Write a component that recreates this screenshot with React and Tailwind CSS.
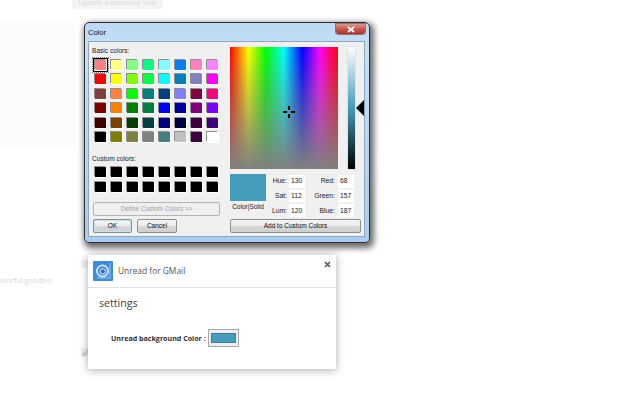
import React from "react";

const basicColors = [
  ["bg-[#ff8080]", "bg-[#ffff80]", "bg-[#80ff80]", "bg-[#00ff80]", "bg-[#80ffff]", "bg-[#0080ff]", "bg-[#ff80c0]", "bg-[#ff80ff]"],
  ["bg-[#ff0000]", "bg-[#ffff00]", "bg-[#80ff00]", "bg-[#00ff40]", "bg-[#00ffff]", "bg-[#0080c0]", "bg-[#8080c0]", "bg-[#ff00ff]"],
  ["bg-[#804040]", "bg-[#ff8040]", "bg-[#00ff00]", "bg-[#008080]", "bg-[#004080]", "bg-[#8080ff]", "bg-[#800040]", "bg-[#ff0080]"],
  ["bg-[#800000]", "bg-[#ff8000]", "bg-[#008000]", "bg-[#008040]", "bg-[#0000ff]", "bg-[#0000a0]", "bg-[#800080]", "bg-[#8000ff]"],
  ["bg-[#400000]", "bg-[#804000]", "bg-[#004000]", "bg-[#004040]", "bg-[#000080]", "bg-[#000040]", "bg-[#400040]", "bg-[#400080]"],
  ["bg-[#000000]", "bg-[#808000]", "bg-[#808040]", "bg-[#808080]", "bg-[#408080]", "bg-[#c0c0c0]", "bg-[#400040]", "bg-[#ffffff]"],
];

const customColors = Array.from({ length: 16 }, () => "bg-black");

const fields = [
  ["Hue:", "130", "Red:", "68"],
  ["Sat:", "112", "Green:", "157"],
  ["Lum:", "120", "Blue:", "187"],
];

function Swatch({ color, selected }) {
  return (
    <div className={`relative h-[10px] w-[11px] shadow-[-1px_-1px_0_#8f8f8f,1px_1px_0_#fff] ${color}`}>
      {selected && (
        <div className="absolute -left-[2px] -top-[2px] h-[14px] w-[15px] border border-black outline-1 outline-dotted outline-[#777]" />
      )}
    </div>
  );
}

function WinButton({ children, className }) {
  return (
    <div className={`flex items-center justify-center rounded-[2px] border border-[#8e8e8e] bg-[linear-gradient(#f4f4f4,#ebebeb_48%,#d8d8d8_52%,#cfcfcf)] text-[6.5px] text-[#111] ${className}`}>
      {children}
    </div>
  );
}

function ColorDialog() {
  return (
    <div className="absolute left-[84px] top-[22px] flex h-[221px] w-[286px] flex-col rounded-[5px] border border-[#2e2e2e] bg-[linear-gradient(#bcd9f5,#c5dff7_12%,#a8cdf0)] pb-[5px] pl-[3px] pr-[4px] shadow-[2px_3px_6px_2px_rgba(0,0,0,0.6)]">
      <div className="flex h-[18px] shrink-0 items-start justify-between">
        <span className="pt-[4px] text-[7.5px] leading-[12px] text-[#111]">Color</span>
        <div className="mt-[1px] flex h-[10px] w-[29px] items-center justify-center rounded-b-[3px] bg-[linear-gradient(#dd9a92,#c8574c_50%,#a8352c)] shadow-[0_0_0_1px_#9a6b68]">
          <svg width="8" height="7" viewBox="0 0 8 7">
            <path d="M1 1l6 5M7 1L1 6" stroke="#fff" strokeWidth="1.8" />
          </svg>
        </div>
      </div>

      <div className="flex flex-1 border border-[#8ea6bd] bg-[#f0f0f0]">
        <div className="flex w-[141px] shrink-0 flex-col pl-[3px]">
          <span className="mt-[3px] text-[6.6px] leading-[12px] text-[#222]">Basic colors:</span>
          <div className="ml-[3px] mt-[3px] flex flex-col gap-[4.4px]">
            {basicColors.map((row, r) => (
              <div key={r} className="flex gap-[5px]">
                {row.map((c, i) => (
                  <Swatch key={i} color={c} selected={r === 0 && i === 0} />
                ))}
              </div>
            ))}
          </div>
          <span className="mt-[11px] text-[6.6px] leading-[12px] text-[#222]">Custom colors:</span>
          <div className="ml-[3px] mt-[2px] grid grid-cols-[repeat(8,11px)] gap-x-[5px] gap-y-[5px]">
            {customColors.map((c, i) => (
              <Swatch key={i} color={c} />
            ))}
          </div>
          <div className="ml-[1px] mt-[10px] flex h-[14px] w-[127px] items-center justify-center rounded-[2px] border border-[#b5b5b5] bg-[#efefef] text-[6.4px] text-[#a0a0a0]">
            Define Custom Colors &gt;&gt;
          </div>
          <div className="ml-[1px] mt-[3px] flex gap-[5px]">
            <WinButton className="h-[14px] w-[39px] border-[#3c7fb1] shadow-[inset_0_0_0_1px_#bfe3f5]">OK</WinButton>
            <WinButton className="h-[14px] w-[40px]">Cancel</WinButton>
          </div>
        </div>

        <div className="flex flex-1 flex-col pt-[5px]">
          <div className="flex">
            <div className="relative h-[122px] w-[108px] bg-[linear-gradient(to_bottom,rgba(128,128,128,0),#808080),linear-gradient(to_right,#ff0000,#ffff00_17%,#00ff00_33%,#00ffff_50%,#0000ff_67%,#ff00ff_83%,#ff0000)]">
              <svg className="absolute left-[53px] top-[59px]" width="12" height="12" viewBox="0 0 12 12">
                <path d="M5 0h2v4H5zM5 8h2v4H5zM0 5h4v2H0zM8 5h4v2H8z" fill="#000" />
              </svg>
            </div>
            <div className="ml-[10px] h-[122px] w-[7px] bg-[linear-gradient(#fff,#439dbb_50%,#000)] shadow-[0_0_0_1px_#e2e2e2]" />
            <svg className="ml-[1px] mt-[53px]" width="8" height="16" viewBox="0 0 8 16">
              <path d="M8 0v16L0 8z" fill="#000" />
            </svg>
          </div>

          <div className="mt-[5px] flex">
            <div className="flex w-[36px] flex-col items-center">
              <div className="h-[27px] w-[36px] bg-[#439dbb]" />
              <span className="whitespace-nowrap text-[6.5px] leading-[12px] text-[#222]">Color|Solid</span>
            </div>
            <div className="flex flex-col">
              {fields.map(([a, b, c, d]) => (
                <div key={a} className="flex h-[14.7px] items-center text-[6.8px] text-[#222]">
                  <span className="w-[21px] text-right">{a}</span>
                  <span className="ml-[2px] flex h-[12.5px] w-[16px] items-center bg-white pl-[2px]">{b}</span>
                  <span className="w-[30px] text-right">{c}</span>
                  <span className="ml-[3px] flex h-[12.5px] w-[16px] items-center bg-white pl-[2px]">{d}</span>
                </div>
              ))}
            </div>
          </div>

          <WinButton className="mt-[1px] h-[14px] w-[131px]">Add to Custom Colors</WinButton>
        </div>
      </div>
    </div>
  );
}

function SettingsPopup() {
  return (
    <div className="absolute left-[88px] top-[255px] flex h-[114px] w-[248px] flex-col bg-white shadow-[0_1px_8px_rgba(0,0,0,0.35)] [font-family:'Open_Sans',sans-serif]">
      <div className="flex h-[33px] shrink-0 items-center border-b border-[#e2e2e2] pl-[5px]">
        <svg className="h-[20px] w-[20px]" viewBox="0 0 20 20">
          <rect width="20" height="20" rx="1" fill="#3f8be0" />
          <path d="M15 2h3v16H4v-2h12V3z" fill="#6ea9e8" />
          <circle cx="9.5" cy="10" r="5.6" fill="none" stroke="#d5e5f5" strokeWidth="1.8" />
          <circle cx="9.8" cy="10.4" r="2.6" fill="#2b6fc0" stroke="#e8f2fb" strokeWidth="1" />
        </svg>
        <span className="ml-[5px] text-[8.4px] text-[#555]">Unread for GMail</span>
        <svg className="ml-auto mr-[5px] mb-[13px]" width="7" height="7" viewBox="0 0 7 7">
          <path d="M1 1l5 5M6 1L1 6" stroke="#555" strokeWidth="1.6" />
        </svg>
      </div>
      <div className="pl-[11px] pt-[6px] text-[10.6px] leading-[18px] text-[#444]">settings</div>
      <div className="ml-[23px] mt-[17px] flex items-center">
        <span className="w-[97px] whitespace-nowrap text-[7.1px] font-bold text-[#333]">Unread background Color :</span>
        <div className="flex h-[18px] w-[31px] items-center justify-center border border-[#a8a8a8] bg-[#eee]">
          <div className="h-[10px] w-[25px] border border-[#3a7f99] bg-[#439dbb]" />
        </div>
      </div>
    </div>
  );
}

export default function App() {
  return (
    <div className="relative h-[400px] w-[640px] overflow-hidden bg-white [font-family:'Liberation_Sans',sans-serif]">
      {/* washed out page behind the dialogs */}
      <div className="absolute left-[72px] top-0 flex h-[9px] w-[91px] items-end justify-center whitespace-nowrap bg-[#f4f4f4] pb-[2px] text-[7.5px] leading-[9px] text-[#dddddd]">
        Update extensions now
      </div>
      <div className="absolute left-0 top-[22px] h-[128px] w-[76px] bg-[#fcfcfc]" />
      <span className="absolute left-0 top-[275px] text-[7.4px] text-[#d8d8d8] [font-family:'Open_Sans',sans-serif]">olorful goodies</span>
      <div className="absolute left-[81px] top-[260px] h-[8px] w-[7px] bg-[#f0f0f0]" />
      <div className="absolute left-[81px] top-[348px] flex h-[9px] w-[7px] items-center justify-center bg-[#eeeeee]">
        <svg width="6" height="6" viewBox="0 0 6 6">
          <path d="M0.5 3.5L2 5l3.5-4.5" fill="none" stroke="#bbb" strokeWidth="1.2" />
        </svg>
      </div>
      <ColorDialog />
      <SettingsPopup />
    </div>
  );
}
